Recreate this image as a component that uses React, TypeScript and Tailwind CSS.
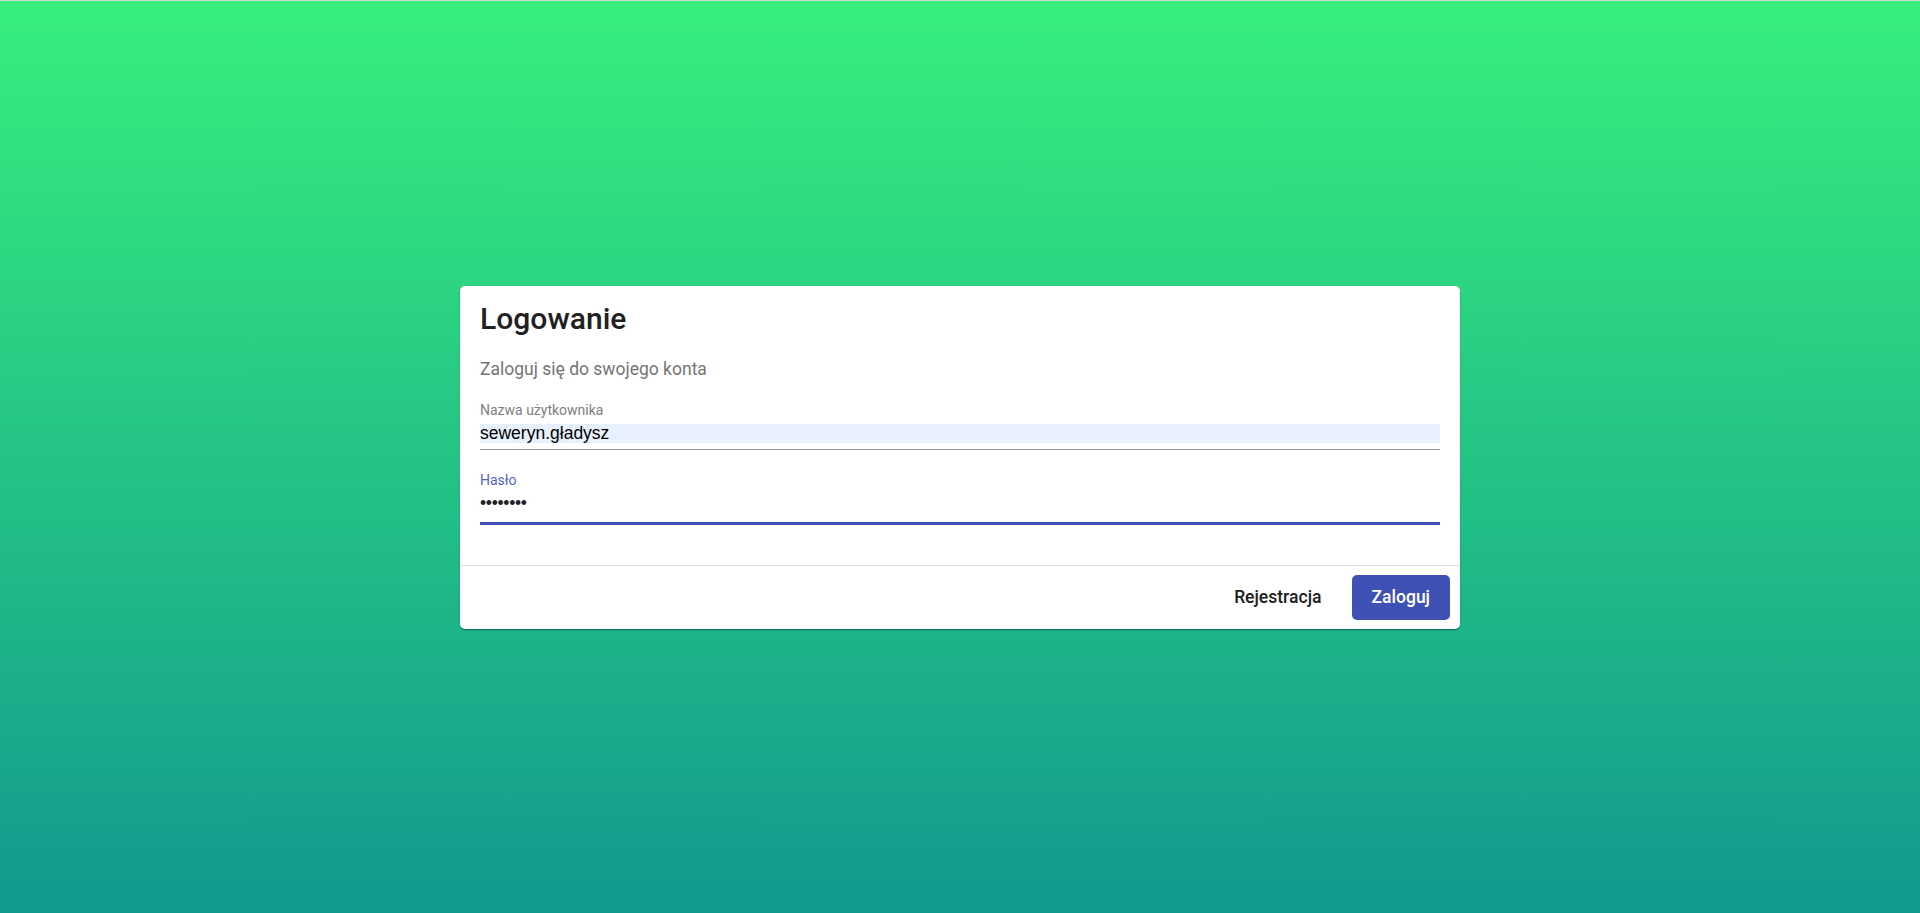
import React from "react";

export default function App() {
  return (
    <div className="w-full h-[913px] flex flex-col font-['Roboto',sans-serif]">
      <div className="h-px w-full bg-[#d6d6d6]" />
      <div className="flex-1 w-full flex items-center justify-center bg-[linear-gradient(180deg,#38ef7d,#11998e)]">
        <div className="w-[1000px] bg-white rounded-[5px] shadow-[0_2px_1px_-1px_rgba(0,0,0,0.2),0_1px_1px_0_rgba(0,0,0,0.14),0_1px_3px_0_rgba(0,0,0,0.12)]">
          <div className="px-[20px] pt-[13px] pb-[40px]">
            <h1 className="text-[30px] leading-[40px] font-medium font-['Roboto_Medium','Roboto',sans-serif] text-[#212121]">Logowanie</h1>
            <p className="mt-[18px] text-[17.5px] leading-[25px] text-[#757575]">Zaloguj się do swojego konta</p>

            <div className="mt-[19px] text-[14px] leading-[18px] text-[#808080]">Nazwa użytkownika</div>
            <div className="mt-[5px] h-[19px] bg-[#e8f0fe] font-['Liberation_Sans',Arial,sans-serif] text-[17.5px] leading-[19px] text-black">
              seweryn.gładysz
            </div>
            <div className="mt-[6px] h-px bg-[#949494]" />

            <div className="mt-[21px] text-[14px] leading-[18px] text-[#5566c2]">Hasło</div>
            <div className="mt-[5px] h-[19px] font-['Liberation_Sans',Arial,sans-serif] text-[17.5px] leading-[19px] text-[#222] tracking-[-0.3px]">
              ••••••••
            </div>
            <div className="mt-[9px] h-[3px] bg-[#3f51b5]" />
          </div>
          <div className="border-t border-[#e0e0e0] flex justify-end gap-[10px] pt-[9px] pb-[9px] pr-[10px]">
            <button className="h-[45px] px-[20px] rounded-[5px] text-[17.5px] font-medium font-['Roboto_Medium','Roboto',sans-serif] text-[#212121] bg-transparent">
              Rejestracja
            </button>
            <button className="h-[45px] px-[20px] rounded-[5px] text-[17.5px] font-medium font-['Roboto_Medium','Roboto',sans-serif] text-white bg-[#3f51b5]">
              Zaloguj
            </button>
          </div>
        </div>
      </div>
    </div>
  );
}
